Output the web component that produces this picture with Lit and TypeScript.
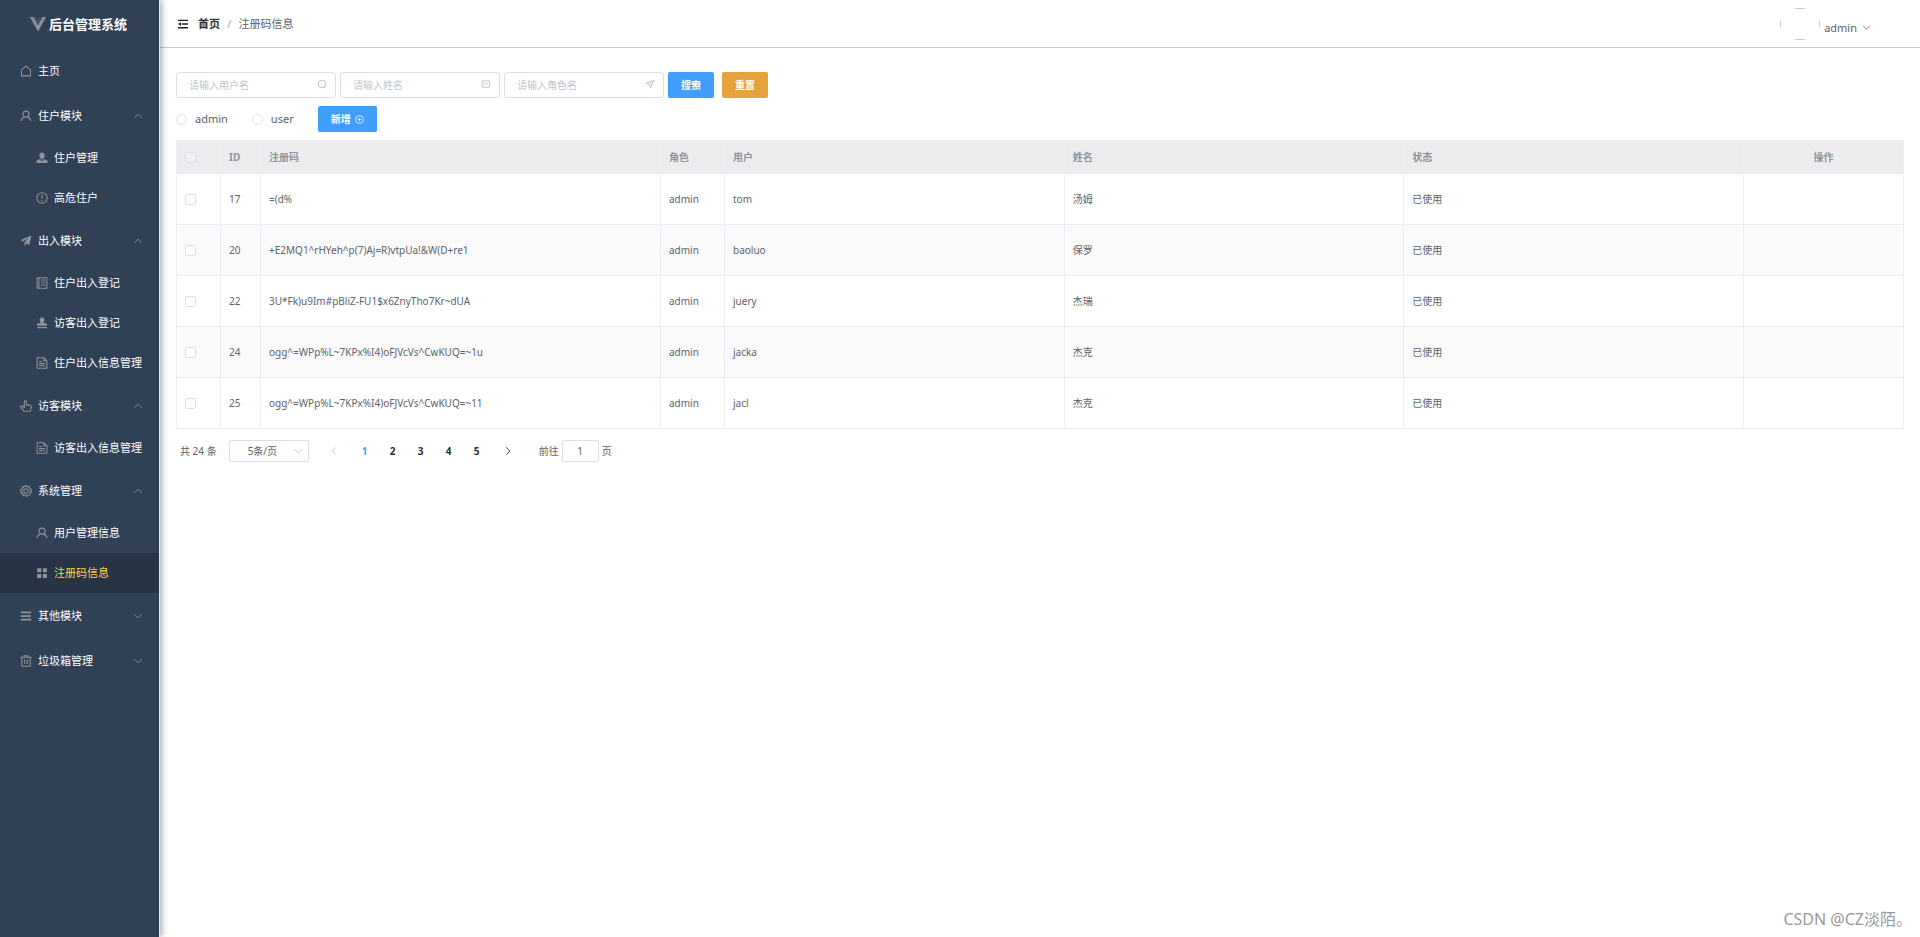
import { LitElement, html, css, svg, nothing, TemplateResult } from "lit";
import { customElement, property, state } from "lit/decorators.js";
import { classMap } from "lit/directives/class-map.js";

const icons: Record<string, TemplateResult> = {
  house: svg`<path d="M2 14.500V6.500L8 1.500L14 6.500V14.500Z"/>`,
  user: svg`<circle cx="8" cy="5.500" r="4"/><path d="M1.500 14.800C1.600 11.500 3.500 10.200 5.800 9.500M14.500 14.800C14.400 11.500 12.500 10.200 10.200 9.500" />`,
  userSolid: svg`<path class="f" d="M8 0.500C10.300 0.500 11.500 2 11.500 4.200C11.500 6 10.800 7.300 9.600 8.200V9L14 10.600C15 11 15.500 12 15.500 14.500H.5C.5 12 1 11 2 10.600L6.400 9V8.200C5.200 7.300 4.500 6 4.500 4.200C4.500 2 5.700 .5 8 .5Z"/><path class="cut" d="M6 9L8 11.500L10 9"/>`,
  warning: svg`<circle cx="8" cy="8" r="7"/><path d="M8 3.800V9.300M8 10.800V12.200" stroke-width="1.400"/>`,
  promotion: svg`<path class="f" d="M15.500 .5L.5 6.500L4.200 8.700L11.500 3.800L6 9.600V15L8.300 11.400L12.200 13.500Z"/>`,
  notebook: svg`<path d="M1.500 1H14.500V15H1.500ZM4 1V15"/><path d="M6.500 4H12.500M6.500 7H12.500M6.500 12C8 9.500 11 9.500 12.500 12"/>`,
  stamp: svg`<path class="f" d="M8 .8C10.200 .8 11.200 2.200 11.200 3.800C11.200 5.500 10 6.300 10 8.200H14.500V11.800H1.500V8.200H6C6 6.300 4.800 5.500 4.800 3.800C4.800 2.200 5.800 .8 8 .8ZM1.500 13.300H14.500V15H1.500Z"/>`,
  document: svg`<path d="M1.500 1H10.500L14.500 5V15H1.500ZM10.500 1V5H14.500M4 6H8M4 8.800H12M4 11.600H12"/>`,
  pointer: svg`<path d="M5.800 10.500V2.200C5.800 .6 8.600 .6 8.600 2.200V6.500C10 6.800 12.500 7 14 7.500C15 8 15.300 9 15 10L13.800 15H5.500C4.500 13 2.500 11.500 1 9.800C.5 8 3 7.300 4 8.500L5.800 10.500"/>`,
  setting: svg`<circle cx="8" cy="8" r="6"/><circle cx="8" cy="8" r="3"/><circle cx="8" cy="8" r="7.200" stroke-dasharray="2.400 2.100"/>`,
  grid: svg`<path class="f" d="M1.500 1.500H7V7H1.500ZM9.200 1.500H14.500V7H9.200ZM1.500 9.200H7V14.500H1.500ZM9.200 9.200H14.500V14.500H9.200Z"/>`,
  operation: svg`<path class="f" d="M1 2H15V4.300H1ZM1 6.900H10V9.200H1ZM1 11.800H15V14H1ZM11 5.500L15 8L11 10.500Z"/>`,
  trash: svg`<path d="M0.500 3H15.500M5.500 3V1H10.500V3M2.500 3V15H13.500V3M6.300 6V12M9.700 6V12"/>`,
  up: svg`<path d="M2 11L8 5L14 11"/>`,
  down: svg`<path d="M2 5L8 11L14 5"/>`,
  left: svg`<path d="M11 2L5 8L11 14"/>`,
  right: svg`<path d="M5 2L11 8L5 14"/>`,
  search: svg`<circle cx="7.800" cy="7.800" r="6"/><path d="M11.500 12.500L14 14.500"/>`,
  message: svg`<path d="M2 3H14V13H2ZM4.500 6L8 9L11.500 6"/>`,
  position: svg`<path d="M14 2L2 7L7 8.500L9 14ZM7 8.500L10.500 5.500"/>`,
  plus: svg`<circle cx="8" cy="8" r="7"/><path d="M8 4.500V11.500M4.500 8H11.500"/>`,
  fold: svg`<path class="f" d="M0 1H16V3.200H0ZM6 6.900H16V9.100H6ZM0 12.800H16V15H0ZM4.500 4.800V11.200L0 8Z"/>`,
};

@customElement("ui-icon")
class UiIcon extends LitElement {
  @property() name = "";
  static styles = css`
    :host { display: inline-flex; flex: none; width: 12px; height: 12px; }
    svg { width: 100%; height: 100%; fill: none; stroke: currentColor; stroke-width: 1.4; }
    .f { fill: currentColor; stroke: none; }
    .cut { stroke: #304156; }
  `;
  render() {
    return html`<svg viewBox="0 0 16 16" aria-hidden="true">${icons[this.name] ?? nothing}</svg>`;
  }
}

interface Entry { label: string; icon: string; children?: Entry[]; open?: boolean; active?: boolean; }

const menu: Entry[] = [
  { label: "主页", icon: "house" },
  { label: "住户模块", icon: "user", open: true, children: [
    { label: "住户管理", icon: "userSolid" },
    { label: "高危住户", icon: "warning" } ] },
  { label: "出入模块", icon: "promotion", open: true, children: [
    { label: "住户出入登记", icon: "notebook" },
    { label: "访客出入登记", icon: "stamp" },
    { label: "住户出入信息管理", icon: "document" } ] },
  { label: "访客模块", icon: "pointer", open: true, children: [
    { label: "访客出入信息管理", icon: "document" } ] },
  { label: "系统管理", icon: "setting", open: true, children: [
    { label: "用户管理信息", icon: "user" },
    { label: "注册码信息", icon: "grid", active: true } ] },
  { label: "其他模块", icon: "operation", children: [] },
  { label: "垃圾箱管理", icon: "trash", children: [] },
];

@customElement("side-menu")
class SideMenu extends LitElement {
  @state() private entries = menu;
  static styles = css`
    :host { display: block; background: #304156; color: #fff; border-right: 1px solid #e6e6e6;
      box-shadow: 2px 0 6px rgba(0, 21, 41, 0.35); z-index: 1; font-size: 11px; }
    .logo { display: flex; align-items: center; justify-content: center; gap: 3px; height: 48px; margin: 0;
      padding-right: 2px; font-size: 13px; font-weight: 700; }
    .mark { width: 16px; height: 16px; }
    ul { list-style: none; margin: 0; padding: 0; }
    .item { display: flex; align-items: center; gap: 6px; box-sizing: border-box; width: 100%; height: 45px;
      padding: 0 16px 0 20px; border: 0; background: none; color: inherit; font: inherit;
      text-align: left; text-decoration: none; white-space: nowrap; cursor: pointer; }
    .item ui-icon { color: #909399; }
    .item .arrow { width: 10px; height: 10px; margin-left: auto; }
    .sub { height: 40px; padding: 0 0 0 36px; }
    .active { background: #263445; color: #ffd04b; }
  `;
  private toggle(e: Entry) {
    e.open = !e.open;
    this.entries = [...this.entries];
  }
  render() {
    return html`
      <h1 class="logo">
        <svg class="mark" viewBox="0 0 16 16" aria-hidden="true">
          <path d="M0 1L8 15.500L16 1H12.500L8 9L3.500 1Z" fill="#8b9299"/>
          <path d="M3.500 1L8 9L12.500 1H9.800L8 4.200L6.200 1Z" fill="#385763"/>
        </svg>
        后台管理系统
      </h1>
      <nav><ul>${this.entries.map((e) => html`<li>
        ${e.children
          ? html`<button class="item" aria-expanded=${e.open ? "true" : "false"} @click=${() => this.toggle(e)}>
              <ui-icon name=${e.icon}></ui-icon>${e.label}
              <ui-icon class="arrow" name=${e.open ? "up" : "down"}></ui-icon></button>`
          : html`<a class="item" href="#"><ui-icon name=${e.icon}></ui-icon>${e.label}</a>`}
        ${e.open ? html`<ul>${e.children!.map((c) => html`<li>
          <a href="#" class=${classMap({ item: true, sub: true, active: !!c.active })}><ui-icon name=${c.icon}></ui-icon>${c.label}</a>
        </li>`)}</ul>` : nothing}
      </li>`)}</ul></nav>`;
  }
}

const rows = [
  { id: 17, code: "=(d%", role: "admin", user: "tom", name: "汤姆", status: "已使用" },
  { id: 20, code: "+E2MQ1^rHYeh^p(7)Aj=R)vtpUa!&W(D+re1", role: "admin", user: "baoluo", name: "保罗", status: "已使用" },
  { id: 22, code: "3U*Fk)u9Im#pBliZ-FU1$x6ZnyTho7Kr~dUA", role: "admin", user: "juery", name: "杰瑞", status: "已使用" },
  { id: 24, code: "ogg^=WPp%L~7KPx%I4)oFJVcVs^CwKUQ=~1u", role: "admin", user: "jacka", name: "杰克", status: "已使用" },
  { id: 25, code: "ogg^=WPp%L~7KPx%I4)oFJVcVs^CwKUQ=~11", role: "admin", user: "jacl", name: "杰克", status: "已使用" },
];

const fields = [
  { hint: "请输入用户名", icon: "search" },
  { hint: "请输入姓名", icon: "message" },
  { hint: "请输入角色名", icon: "position" },
];

@customElement("app-root")
class AppRoot extends LitElement {
  @state() private page = 1;
  static styles = css`
    :host { display: grid; grid-template-columns: 160px minmax(0, 1fr); min-height: 100vh; background: #fff;
      color: #606266; font: 10px/14px "Noto Sans", "Noto Sans CJK SC", sans-serif; }
    button, input, select { font: inherit; color: inherit; margin: 0; box-sizing: border-box; }
    .head { display: flex; align-items: center; justify-content: space-between; height: 47px;
      padding: 0 49px 0 18px; border-bottom: 1px solid #ccc; font-size: 11px; }
    .crumbs { display: flex; align-items: center; }
    .fold { display: flex; padding: 0; border: 0; background: none; color: #222; margin-right: 10px; }
    .fold ui-icon { width: 10px; height: 10px; }
    .home { color: #303133; font-weight: 700; text-decoration: none; }
    .slash { margin: 0 7px; color: #c0c4cc; font-weight: 700; }
    .account { display: flex; align-items: flex-end; gap: 4px; }
    .avatar { width: 40px; height: 32px; border-radius: 50%; overflow: hidden; display: flex; }
    .frame { flex: 1; border: 1px solid #c0c0c0; }
    .who { display: flex; align-items: center; gap: 5px; padding: 0 0 4px; border: 0; background: none; line-height: 16px; }
    .who ui-icon { width: 9px; height: 9px; }
    .body { padding: 24px 16px; }
    .bar { display: flex; align-items: center; height: 26px; margin-bottom: 8px; }
    .filters { gap: 4px; }
    .field { position: relative; display: flex; width: 160px; }
    .box { width: 100%; height: 26px; padding: 0 24px 0 12px; border: 1px solid #dcdfe6; border-radius: 3px; background: #fff; outline: none; }
    .box::placeholder { color: #c0c4cc; opacity: 1; }
    .field ui-icon { position: absolute; right: 9px; top: 7px; width: 10px; height: 10px; color: #b4b8c0; }
    .btn { display: inline-flex; align-items: center; justify-content: center; gap: 4px; height: 26px; padding: 0 13px;
      border: 0; border-radius: 2px; background: #409eff; color: #fff; font-weight: 700; cursor: pointer; }
    .btn ui-icon { width: 9px; height: 9px; }
    .warn { background: #e6a23c; margin-left: 4px; }
    .radio { display: flex; align-items: center; gap: 8px; margin-right: 24px; font-size: 11px; }
    .radio input { appearance: none; width: 11px; height: 11px; border: 1px solid #dcdfe6; border-radius: 50%; background: #fff; }
    .radio input:checked { border: 3px solid #409eff; }
    .tick { appearance: none; display: block; width: 11px; height: 11px; border: 1px solid #dcdfe6; border-radius: 2px; background: #fff; }
    th .tick { background: #edf2fc; }
    .tick:checked { background: #409eff; border-color: #409eff; }
    table { width: 100%; table-layout: fixed; border-collapse: separate; border-spacing: 0;
      border: 1px solid #ebeef5; border-width: 1px 0 0 1px; }
    th, td { padding: 0 8px; text-align: left; border: 1px solid #ebeef5; border-width: 0 1px 1px 0; box-sizing: border-box; }
    th { height: 33px; background: #ececee; color: #909399; font-weight: 700; }
    td { height: 51px; white-space: nowrap; overflow: hidden; }
    tbody tr:nth-child(even) { background: #fafafa; }
    .c-tick { width: 44px; } .c-id { width: 40px; } .c-code { width: 400px; } .c-role { width: 64px; } .c-act { width: 160px; }
    .mid { text-align: center; }
    .pager { display: flex; align-items: center; height: 22px; margin-top: 11px; padding-left: 4px; }
    .size { position: relative; display: flex; width: 80px; margin: 0 8px 0 12px; }
    .size select { appearance: none; width: 100%; height: 22px; padding: 0 30px 0 18px; border: 1px solid #dcdfe6; border-radius: 2px; background: #fff; }
    .size ui-icon { position: absolute; right: 6px; top: 6px; width: 10px; height: 10px; color: #c0c4cc; }
    .num { display: flex; align-items: center; justify-content: center; width: 28px; height: 22px; padding: 0; border: 0;
      background: none; color: #303133; font-weight: 700; cursor: pointer; }
    .num:disabled { color: #c0c4cc; }
    .num ui-icon { width: 10px; height: 10px; }
    .edge { width: 34px; }
    .on { color: #409eff; }
    .jump { display: flex; align-items: center; gap: 3px; margin-left: 14px; }
    .jump input { width: 37px; height: 22px; padding: 0; text-align: center; border: 1px solid #dcdfe6; border-radius: 2px; }
    .credit { position: absolute; right: 8px; bottom: 6px; color: #999; font-size: 16px; line-height: 24px; }
  `;
  render() {
    return html`
      <side-menu></side-menu>
      <div>
        <header class="head">
          <div class="crumbs">
            <button class="fold" aria-label="折叠"><ui-icon name="fold"></ui-icon></button>
            <a class="home" href="#">首页</a><span class="slash">/</span><span>注册码信息</span>
          </div>
          <div class="account">
            <div class="avatar"><div class="frame"></div></div>
            <button class="who">admin<ui-icon name="down"></ui-icon></button>
          </div>
        </header>
        <main class="body">
          <form class="bar filters" @submit=${(e: Event) => e.preventDefault()}>
            ${fields.map((f) => html`<label class="field">
              <input class="box" type="text" placeholder=${f.hint} aria-label=${f.hint}><ui-icon name=${f.icon}></ui-icon></label>`)}
            <button class="btn">搜索</button>
            <button class="btn warn" type="reset">重置</button>
          </form>
          <div class="bar">
            ${["admin", "user"].map((r) => html`<label class="radio"><input type="radio" name="role" value=${r}>${r}</label>`)}
            <button class="btn">新增<ui-icon name="plus"></ui-icon></button>
          </div>
          <table>
            <colgroup>
              <col class="c-tick"><col class="c-id"><col class="c-code"><col class="c-role"><col><col><col><col class="c-act">
            </colgroup>
            <thead><tr>
              <th><input class="tick" type="checkbox" aria-label="全选"></th>
              <th>ID</th><th>注册码</th><th>角色</th><th>用户</th><th>姓名</th><th>状态</th><th class="mid">操作</th>
            </tr></thead>
            <tbody>${rows.map((r) => html`<tr>
              <td><input class="tick" type="checkbox" aria-label=${r.id}></td>
              <td>${r.id}</td><td>${r.code}</td><td>${r.role}</td><td>${r.user}</td><td>${r.name}</td><td>${r.status}</td><td></td>
            </tr>`)}</tbody>
          </table>
          <div class="pager">
            <span>共 24 条</span>
            <label class="size"><select aria-label="每页条数"><option>5条/页</option></select><ui-icon name="down"></ui-icon></label>
            <button class="num edge" aria-label="上一页" ?disabled=${this.page === 1} @click=${() => this.page--}><ui-icon name="left"></ui-icon></button>
            ${[1, 2, 3, 4, 5].map((n) => html`<button class=${classMap({ num: true, on: n === this.page })} @click=${() => (this.page = n)}>${n}</button>`)}
            <button class="num edge" aria-label="下一页" ?disabled=${this.page === 5} @click=${() => this.page++}><ui-icon name="right"></ui-icon></button>
            <label class="jump">前往<input type="text" .value=${String(this.page)}>页</label>
          </div>
        </main>
      </div>
      <div class="credit">CSDN @CZ淡陌。</div>`;
  }
}
